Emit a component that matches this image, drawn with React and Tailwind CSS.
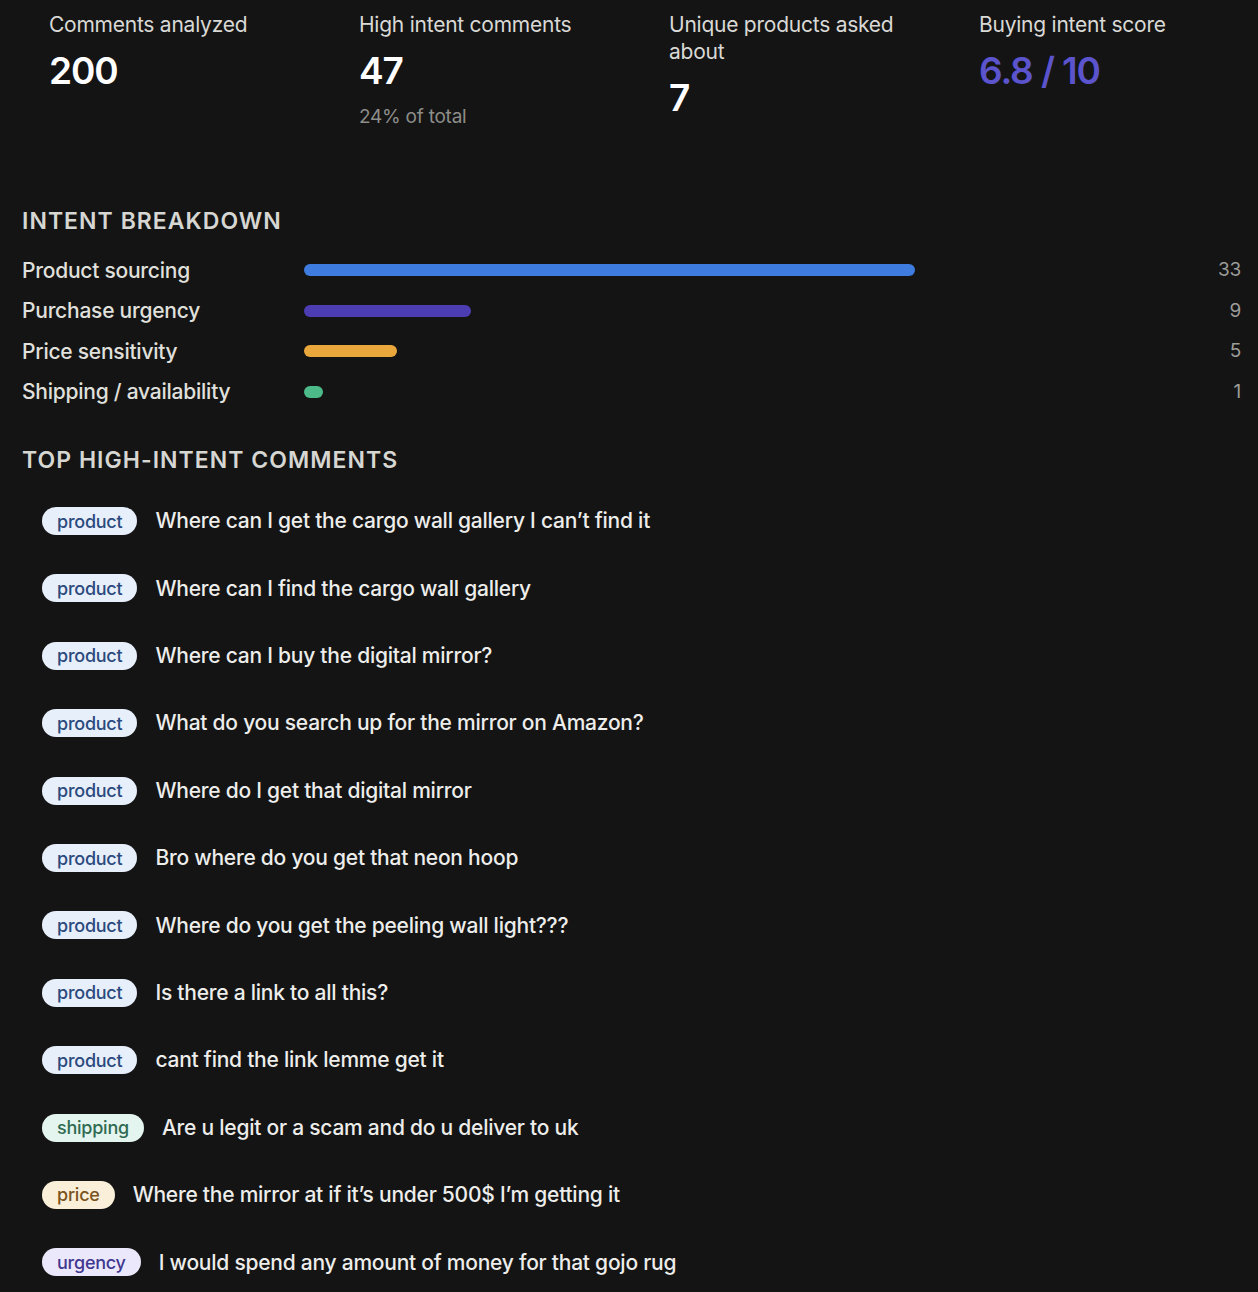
const stats = [
  { label: 'Comments analyzed', value: '200' },
  { label: 'High intent comments', value: '47', sub: '24% of total' },
  { label: 'Unique products asked about', value: '7' },
  { label: 'Buying intent score', value: '6.8 / 10', accent: true },
];

const breakdown = [
  { label: 'Product sourcing', count: 33, color: 'bg-[#3f7ce0]' },
  { label: 'Purchase urgency', count: 9, color: 'bg-[#4c3db3]' },
  { label: 'Price sensitivity', count: 5, color: 'bg-[#eaa83c]' },
  { label: 'Shipping / availability', count: 1, color: 'bg-[#4dba8a]' },
];

const tagStyles = {
  product: 'bg-[#e7effb] text-[#2b4a7d]',
  shipping: 'bg-[#e3f5ee] text-[#2f6a52]',
  price: 'bg-[#faefd9] text-[#7a5420]',
  urgency: 'bg-[#ebe8fb] text-[#41378f]',
};

const comments = [
  ['product', 'Where can I get the cargo wall gallery I can\u2019t find it'],
  ['product', 'Where can I find the cargo wall gallery'],
  ['product', 'Where can I buy the digital mirror?'],
  ['product', 'What do you search up for the mirror on Amazon?'],
  ['product', 'Where do I get that digital mirror'],
  ['product', 'Bro where do you get that neon hoop'],
  ['product', 'Where do you get the peeling wall light???'],
  ['product', 'Is there a link to all this?'],
  ['product', 'cant find the link lemme get it'],
  ['shipping', 'Are u legit or a scam and do u deliver to uk'],
  ['price', 'Where the mirror at if it\u2019s under 500$ I\u2019m getting it'],
  ['urgency', 'I would spend any amount of money for that gojo rug'],
];

const maxCount = 33;

export default function App() {
  return (
    <div className="min-h-screen bg-[#141414] text-[#ededeb] font-['Inter',sans-serif] tracking-[-0.015em]">
      <div className="flex pl-[49px] pt-[11px]">
        {stats.map((s) => (
          <div key={s.label} className="w-[310px] shrink-0 pr-[60px]">
            <div className="text-[21px] leading-[27px] text-[#d9d9d6]">{s.label}</div>
            <div
              className={`mt-[9px] text-[37px] leading-[48px] font-semibold tracking-[-0.03em] ${
                s.accent ? 'text-[#5b54cc]' : 'text-white'
              }`}
            >
              {s.value}
            </div>
            {s.sub && <div className="mt-[10px] text-[19px] leading-[24px] text-[#8d8d8a]">{s.sub}</div>}
          </div>
        ))}
      </div>

      <div className="pl-[22px] pr-[17px]">
        <h2 className="mt-[77px] text-[23px] leading-[30px] font-semibold uppercase tracking-[0.045em] text-[#d6d6d2]">
          Intent breakdown
        </h2>
        <div className="mt-[14px] flex flex-col">
          {breakdown.map((b) => (
            <div key={b.label} className="flex items-center h-[40.6px]">
              <div className="w-[282px] text-[21px] font-medium text-[#e0e0dd]">{b.label}</div>
              <div className="flex-1">
                <div
                  className={`h-[12px] rounded-full ${b.color}`}
                  style={{ width: `${Math.max(17, (b.count / maxCount) * 611)}px` }}
                />
              </div>
              <div className="w-[40px] text-right text-[19px] text-[#9c9c99]">{b.count}</div>
            </div>
          ))}
        </div>

        <h2 className="mt-[33px] text-[23px] leading-[30px] font-semibold uppercase tracking-[0.045em] text-[#d6d6d2]">
          Top high-intent comments
        </h2>
        <div className="mt-[12px] flex flex-col pl-[20px]">
          {comments.map(([tag, text], i) => (
            <div key={i} className="flex items-center gap-[18px] h-[67.4px]">
              <span
                className={`inline-flex items-center h-[28px] px-[15px] rounded-full text-[18px] font-medium ${tagStyles[tag]}`}
              >
                {tag}
              </span>
              <span className="text-[21px] font-medium text-[#ededeb]">{text}</span>
            </div>
          ))}
        </div>
      </div>
    </div>
  );
}
